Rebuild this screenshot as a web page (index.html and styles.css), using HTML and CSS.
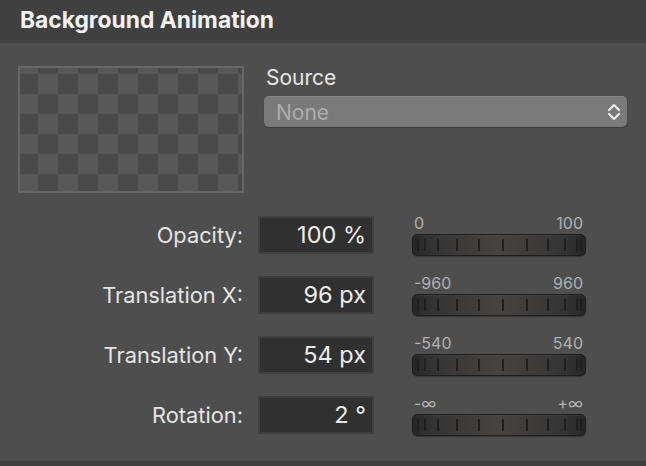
FILE: index.html
```html
<!DOCTYPE html>
<html>
<head>
<meta charset="utf-8">
<link rel="stylesheet" href="styles.css">
</head>
<body>
<div class="panel">
  <div class="header">Background Animation</div>
  <div class="top">
    <div class="preview"><div class="checker"></div></div>
    <div class="source">
      <div class="source-label">Source</div>
      <div class="popup">
        <span class="popup-text">None</span>
        <svg class="chev" width="14" height="20" viewBox="0 0 14 20"><path d="M2 8 L7 3 L12 8 M2 12 L7 17 L12 12" fill="none" stroke="#f2f2f2" stroke-width="2" stroke-linecap="round" stroke-linejoin="round"/></svg>
      </div>
    </div>
  </div>
  <div class="rows">
    <div class="row">
      <div class="label">Opacity:</div>
      <div class="field">100 %</div>
      <div class="slider"><div class="range"><span>0</span><span>100</span></div><div class="wheel"><i style="left:4px"></i><i style="left:11px"></i><i style="left:24px"></i><i style="left:43px"></i><i style="left:65px"></i><i style="left:89px"></i><i style="left:113px"></i><i style="left:134px"></i><i style="left:151px"></i><i style="left:163px"></i><i style="left:167px"></i></div></div>
    </div>
    <div class="row">
      <div class="label">Translation X:</div>
      <div class="field">96 px</div>
      <div class="slider"><div class="range"><span>-960</span><span>960</span></div><div class="wheel"><i style="left:4px"></i><i style="left:11px"></i><i style="left:24px"></i><i style="left:43px"></i><i style="left:65px"></i><i style="left:89px"></i><i style="left:113px"></i><i style="left:134px"></i><i style="left:151px"></i><i style="left:163px"></i><i style="left:167px"></i></div></div>
    </div>
    <div class="row">
      <div class="label">Translation Y:</div>
      <div class="field">54 px</div>
      <div class="slider"><div class="range"><span>-540</span><span>540</span></div><div class="wheel"><i style="left:4px"></i><i style="left:11px"></i><i style="left:24px"></i><i style="left:43px"></i><i style="left:65px"></i><i style="left:89px"></i><i style="left:113px"></i><i style="left:134px"></i><i style="left:151px"></i><i style="left:163px"></i><i style="left:167px"></i></div></div>
    </div>
    <div class="row">
      <div class="label">Rotation:</div>
      <div class="field">2 °</div>
      <div class="slider"><div class="range"><span>-∞</span><span>+∞</span></div><div class="wheel"><i style="left:4px"></i><i style="left:11px"></i><i style="left:24px"></i><i style="left:43px"></i><i style="left:65px"></i><i style="left:89px"></i><i style="left:113px"></i><i style="left:134px"></i><i style="left:151px"></i><i style="left:163px"></i><i style="left:167px"></i></div></div>
    </div>
  </div>
  <div class="footer"></div>
</div>
</body>
</html>
```

FILE: styles.css
```css
* { box-sizing: border-box; }
html, body { margin: 0; padding: 0; }
body {
  width: 646px;
  height: 466px;
  overflow: hidden;
  background: #4e4e4e;
  font-family: Inter, Roboto, "Liberation Sans", sans-serif;
  color: #e2e2e2;
}
.panel { display: flex; flex-direction: column; height: 466px; }
.header {
  height: 43px;
  background: #404040;
  padding-left: 20px;
  padding-top: 6px;
  font-size: 22.8px;
  line-height: 28px;
  font-weight: 700;
  color: #f2f2f2;
}
.top {
  display: flex;
  padding: 23px 0 0 18px;
  height: 173px;
}
.preview {
  width: 226px;
  height: 127px;
  border: 2px solid #676767;
  background: #4a4a4a;
}
.checker {
  width: 100%;
  height: 100%;
  background-image: conic-gradient(#585858 25%, #4a4a4a 0 50%, #585858 0 75%, #4a4a4a 0);
  background-size: 40px 40px;
  background-position: -22px -14px;
}
.source { margin-left: 20px; display: flex; flex-direction: column; }
.source-label {
  font-size: 21px;
  line-height: 24px;
  margin-left: 2px;
  color: #e6e6e6;
}
.popup {
  margin-top: 6px;
  width: 363px;
  height: 31px;
  border-radius: 5px;
  background: #7a7a7a;
  border-top: 1px solid #858585;
  box-shadow: 0 1px 1px rgba(0,0,0,0.25);
  display: flex;
  align-items: center;
  justify-content: space-between;
  padding: 0 6px 0 12px;
}
.popup-text { font-size: 21px; color: #acacac; }
.chev { display: block; }
.rows { display: flex; flex-direction: column; gap: 22px; }
.row {
  display: grid;
  grid-template-columns: 243px 116px 174px;
  height: 38px;
}
.label {
  text-align: right;
  font-size: 21.8px;
  line-height: 38px;
  color: #e4e4e4;
}
.field {
  margin-left: 15px;
  width: 116px;
  height: 38px;
  background: #303030;
  border: 2px solid #3f3f3f;
  text-align: right;
  font-size: 23.5px;
  line-height: 34px;
  padding-right: 6px;
  color: #ececec;
}
.slider {
  margin-left: 53px;
  width: 174px;
}
.range {
  display: flex;
  justify-content: space-between;
  font-size: 16px;
  line-height: 14px;
  color: #b0b0b0;
  padding: 0 3px 0 2px;
  height: 18px;
}
.wheel {
  position: relative;
  height: 22px;
  border-radius: 5px;
  border: 1px solid #1e1e1e;
  background: linear-gradient(90deg, #262626 0%, #353535 12%, #464240 50%, #353535 88%, #262626 100%);
  box-shadow: 0 1px 1px rgba(0,0,0,0.3), inset 0 1px 0 rgba(255,255,255,0.04);
}
.wheel i {
  position: absolute;
  top: 4px;
  width: 2px;
  height: 12px;
  background: #1f1f1f;
}
.footer {
  margin-top: auto;
  height: 5px;
  background: #3d3d3d;
}
```
